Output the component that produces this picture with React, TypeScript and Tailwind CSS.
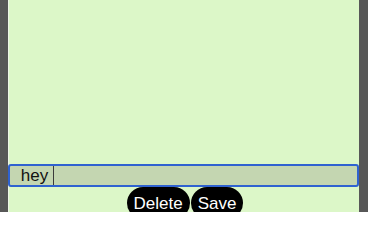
export default function App() {
  return (
    <div className="flex h-[212px] w-[368px] overflow-hidden bg-[#575757] font-['Liberation_Sans',Arial,sans-serif]">
      <div className="w-[8px] shrink-0" />
      <div className="flex flex-1 flex-col border-l border-[#eef5e6] bg-[#dcf7c8] pt-[164px]">
        <div className="-ml-px flex h-[23px] items-stretch rounded-[3px] border-2 border-[#2f62d0] bg-[#c4d6b1]">
          <span className="flex w-[44px] items-center justify-center border-r border-[#3b3b3b] pl-[6px] text-[17px] leading-none text-[#111]">
            hey
          </span>
          <input className="flex-1 bg-transparent outline-none" />
        </div>
        <div className="flex justify-center gap-px pl-[2px]">
          <button className="h-[32px] rounded-full bg-black px-[7px] text-[17px] leading-none text-white">
            Delete
          </button>
          <button className="h-[32px] rounded-full bg-black px-[7px] text-[17px] leading-none text-white">
            Save
          </button>
        </div>
      </div>
      <div className="w-[9px] shrink-0" />
    </div>
  );
}
